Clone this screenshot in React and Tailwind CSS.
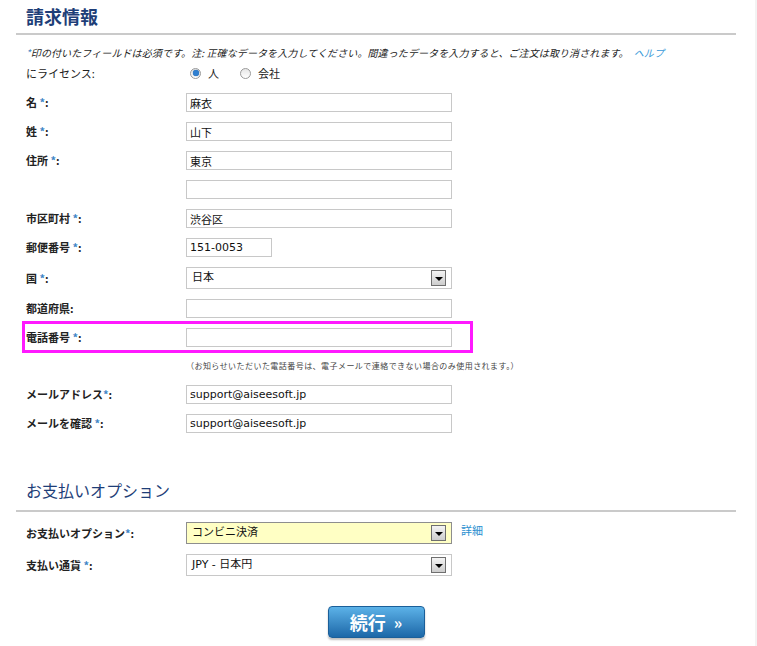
import React, { useState } from "react";

const font = "font-['DejaVu_Sans','Noto_Sans_CJK_JP',sans-serif]";
const cjk = "font-['Noto_Sans_CJK_JP',sans-serif]";

const Label = ({ text, required }) => (
  <div className={`w-[170px] pl-[10px] text-[11px] font-bold text-[#222] ${cjk}`}>
    {text}
    {required && <span className="text-[#3f86c6]">*</span>}
    {text && ":"}
  </div>
);

const TextInput = ({ value = "", width = "w-[266px]" }) => (
  <input
    defaultValue={value}
    className={`${width} h-[19px] border border-[#c8c8c8] bg-white px-[3px] text-[11px] text-[#111] outline-none ${font}`}
  />
);

const Arrow = () => (
  <span className="flex h-[16px] w-[15px] items-center justify-center border border-[#6f6f6f] bg-gradient-to-b from-[#f4f4f4] to-[#cdcdcd]">
    <span className="mt-[2px] h-0 w-0 border-x-[4px] border-t-[4px] border-x-transparent border-t-black" />
  </span>
);

const Select = ({ value, yellow }) => (
  <div
    className={`flex h-[22px] w-[266px] items-center justify-between border pl-[5px] pr-[5px] text-[11px] text-[#111] ${font} ${
      yellow ? "border-[#8e8e8e] bg-[#ffffc4]" : "border-[#c8c8c8] bg-white"
    }`}
  >
    <span>{value}</span>
    <Arrow />
  </div>
);

const Row = ({ label, required, children, tall }) => (
  <div className={`flex items-center ${tall ? "h-[22px]" : "h-[19px]"}`}>
    <Label text={label} required={required} />
    {children}
  </div>
);

const Radio = ({ checked, onClick }) => (
  <span
    onClick={onClick}
    className="flex h-[11px] w-[11px] items-center justify-center rounded-full border border-[#9a9a9a] bg-gradient-to-b from-[#e6e6e6] to-[#ffffff]"
  >
    {checked && <span className="h-[6px] w-[6px] rounded-full bg-[#2f7fd0] shadow-[0_0_1px_#0a4a90]" />}
  </span>
);

export default function App() {
  const [license, setLicense] = useState("person");

  return (
    <div className={`flex h-[646px] overflow-hidden bg-white text-[#222] ${font}`}>
      <div className="w-[755px] pl-[16px]">
        <div className="w-[720px]">
          {/* 請求情報 */}
          <h2 className={`pl-[10px] pt-[4px] text-[18px] font-bold leading-[24px] text-[#1e3e78] ${cjk}`}>
            請求情報
          </h2>
          <div className="mt-[5px] h-[2px] bg-[#cacaca]" />

          <p className={`mt-[10px] pl-[10px] text-[10px] italic leading-[16px] tracking-[0.1px] text-[#222] ${cjk}`}>
            <span className="text-[#3f86c6]">*</span>
            印の付いたフィールドは必須です。注: 正確なデータを入力してください。間違ったデータを入力すると、ご注文は取り消されます。
            <span className="ml-[5px] text-[#3a9ad9]">ヘルプ</span>
          </p>

          <div className={`mt-[4px] flex h-[16px] items-center text-[11px] ${cjk}`}>
            <div className="w-[174px] pl-[10px]">にライセンス:</div>
            <Radio checked={license === "person"} onClick={() => setLicense("person")} />
            <span className="ml-[7px]">人</span>
            <span className="ml-[21px]">
              <Radio checked={license === "company"} onClick={() => setLicense("company")} />
            </span>
            <span className="ml-[7px]">会社</span>
          </div>

          <div className="mt-[12px] flex flex-col gap-[10px]">
            <Row label="名 " required>
              <TextInput value="麻衣" />
            </Row>
            <Row label="姓 " required>
              <TextInput value="山下" />
            </Row>
            <Row label="住所 " required>
              <TextInput value="東京" />
            </Row>
            <Row label="">
              <TextInput />
            </Row>
            <Row label="市区町村 " required>
              <TextInput value="渋谷区" />
            </Row>
            <Row label="郵便番号 " required>
              <TextInput value="151-0053" width="w-[86px]" />
            </Row>
            <Row label="国 " required tall>
              <Select value="日本" />
            </Row>
            <Row label="都道府県">
              <TextInput />
            </Row>
            <div className="relative">
              <Row label="電話番号 " required>
                <TextInput />
              </Row>
              <span className="pointer-events-none absolute -bottom-[6px] -top-[7px] left-[6px] w-[451px] border-[3px] border-[#ff19ff]" />
            </div>
            <div className={`flex h-[18px] items-center pl-[170px] text-[8px] tracking-[0.45px] text-[#444] ${cjk}`}>
              （お知らせいただいた電話番号は、電子メールで連絡できない場合のみ使用されます。）
            </div>
            <Row label="メールアドレス" required>
              <TextInput value="support@aiseesoft.jp" />
            </Row>
            <Row label="メールを確認 " required>
              <TextInput value="support@aiseesoft.jp" />
            </Row>
          </div>

          {/* お支払いオプション */}
          <h2 className={`mt-[45px] pl-[10px] text-[16px] leading-[24px] text-[#1e3e78] ${cjk}`}>
            お支払いオプション
          </h2>
          <div className="mt-[8px] h-[2px] bg-[#cacaca]" />

          <div className="mt-[10px] flex flex-col gap-[10px]">
            <Row label="お支払いオプション" required tall>
              <Select value="コンビニ決済" yellow />
              <span className={`ml-[9px] -mt-[6px] text-[11px] text-[#2a8fd0] ${cjk}`}>詳細</span>
            </Row>
            <Row label="支払い通貨 " required tall>
              <Select value="JPY - 日本円" />
            </Row>
          </div>

          <div className="mt-[30px] flex justify-center">
            <button
              type="button"
              className={`flex h-[32px] w-[97px] items-center justify-center gap-[8px] rounded-[4px] border border-[#1b5f99] bg-gradient-to-b from-[#5cb2e8] to-[#1c68a8] text-white shadow-[0_2px_2px_rgba(0,0,0,0.25)] ${cjk}`}
            >
              <span className="text-[18px] font-bold leading-none">続行</span>
              <span className="text-[16px] font-bold leading-none">»</span>
            </button>
          </div>
        </div>
      </div>
      <div className="w-[2px] bg-[#f3f3f3]" />
    </div>
  );
}
